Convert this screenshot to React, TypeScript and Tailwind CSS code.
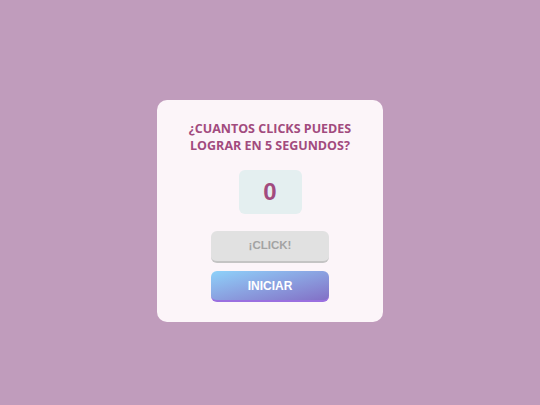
export default function App() {
  return (
    <div className="flex h-[405px] w-[540px] items-start justify-center bg-[#c09cbc] pt-[100px]">
      <div className="flex w-[226px] flex-col items-center rounded-[10px] bg-[#fcf5f9] px-4 pt-[20px] pb-[20px]">
        <h1 className="text-center font-['Open_Sans','Lato',sans-serif] text-[12.5px] leading-[17px] font-bold text-[#a24b7e]">
          ¿CUANTOS CLICKS PUEDES
          <br />
          LOGRAR EN 5 SEGUNDOS?
        </h1>
        <div className="mt-[16px] flex h-[44px] w-[63px] items-center justify-center rounded-[6px] bg-[#e4eff0] font-['Liberation_Sans',Arial,sans-serif] text-[24px] font-bold text-[#a24b7e]">
          0
        </div>
        <button
          disabled
          className="mt-[17px] flex h-[32px] w-[118px] items-center justify-center rounded-[6px] border-b-2 border-[#c4c4c4] bg-[#e1e1e1] font-['Liberation_Sans',Arial,sans-serif] text-[11.5px] font-bold text-[#a3a3a3]"
        >
          ¡CLICK!
        </button>
        <button className="mt-[8px] flex h-[31px] w-[118px] items-center justify-center rounded-[6px] border-b-2 border-[#9a6fe0] bg-gradient-to-br from-[#8dd2fa] to-[#8270c6] font-['Liberation_Sans',Arial,sans-serif] text-[12px] font-bold text-white">
          INICIAR
        </button>
      </div>
    </div>
  )
}
